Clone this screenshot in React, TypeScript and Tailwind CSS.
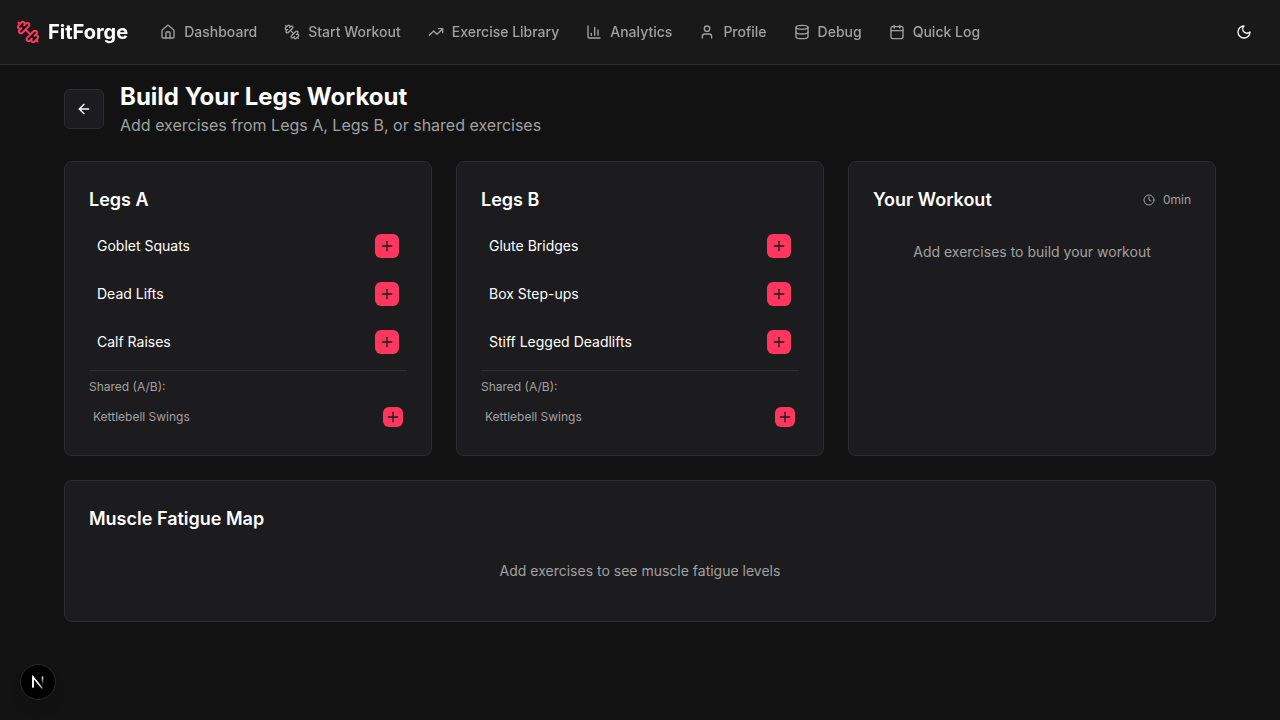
import {
  ArrowLeft,
  Calendar,
  ChartColumn,
  Clock,
  Database,
  House,
  Plus,
  TrendingUp,
  User,
} from "lucide-react";
import type { ComponentType, ReactNode } from "react";

type IconProps = { className?: string };

function StrokeIcon({ className, children }: IconProps & { children: ReactNode }) {
  return (
    <svg
      className={className}
      viewBox="0 0 24 24"
      fill="none"
      stroke="currentColor"
      strokeWidth="2"
      strokeLinecap="round"
      strokeLinejoin="round"
      aria-hidden="true"
    >
      {children}
    </svg>
  );
}

function DumbbellIcon({ className }: IconProps) {
  return (
    <StrokeIcon className={className}>
      <path d="M14.4 14.4 9.6 9.6" />
      <path d="M18.657 21.485a2 2 0 1 1-2.829-2.828l-1.767 1.768a2 2 0 1 1-2.829-2.829l6.364-6.364a2 2 0 1 1 2.829 2.829l-1.768 1.767a2 2 0 1 1 2.828 2.829z" />
      <path d="m21.5 21.5-1.4-1.4" />
      <path d="M3.9 3.9 2.5 2.5" />
      <path d="M6.404 12.768a2 2 0 1 1-2.829-2.829l1.768-1.767a2 2 0 1 1-2.828-2.829l2.828-2.828a2 2 0 1 1 2.829 2.828l1.767-1.768a2 2 0 1 1 2.829 2.829z" />
    </StrokeIcon>
  );
}

function MoonIcon({ className }: IconProps) {
  return (
    <StrokeIcon className={className}>
      <path d="M12 3a6 6 0 0 0 9 9 9 9 0 1 1-9-9Z" />
    </StrokeIcon>
  );
}

const navItems: { label: string; icon: ComponentType<IconProps> }[] = [
  { label: "Dashboard", icon: House },
  { label: "Start Workout", icon: DumbbellIcon },
  { label: "Exercise Library", icon: TrendingUp },
  { label: "Analytics", icon: ChartColumn },
  { label: "Profile", icon: User },
  { label: "Debug", icon: Database },
  { label: "Quick Log", icon: Calendar },
];

const groups = [
  {
    title: "Legs A",
    exercises: ["Goblet Squats", "Dead Lifts", "Calf Raises"],
    shared: ["Kettlebell Swings"],
  },
  {
    title: "Legs B",
    exercises: ["Glute Bridges", "Box Step-ups", "Stiff Legged Deadlifts"],
    shared: ["Kettlebell Swings"],
  },
];

function Header() {
  return (
    <header className="sticky top-0 z-40 border-b border-[#2d2d2d] bg-[#1a1a1a]/95 backdrop-blur-sm">
      <div className="flex h-16 items-center px-4">
        <a href="#home" className="mr-8 flex items-center gap-2">
          <DumbbellIcon className="size-6 text-[#ff375f]" />
          <span className="text-xl font-bold">FitForge</span>
        </a>
        <nav className="flex flex-1 items-center gap-[27px]">
          {navItems.map(({ label, icon: Icon }) => (
            <a
              key={label}
              href="#nav"
              className="flex items-center gap-2 text-sm font-medium whitespace-nowrap text-[#a1a1a1]"
            >
              <Icon className="size-4" />
              {label}
            </a>
          ))}
        </nav>
        <button
          type="button"
          aria-label="Toggle theme"
          className="flex size-10 items-center justify-center rounded-md"
        >
          <MoonIcon className="size-4" />
        </button>
      </div>
    </header>
  );
}

function Card({ children }: { children: ReactNode }) {
  return (
    <section className="rounded-lg border border-[#2d2d2d] bg-[#1c1c1e] p-6">
      {children}
    </section>
  );
}

function CardTitle({ children }: { children: ReactNode }) {
  return <h2 className="text-lg font-semibold">{children}</h2>;
}

function ExerciseGroup({ title, exercises, shared }: (typeof groups)[number]) {
  return (
    <Card>
      <CardTitle>{title}</CardTitle>
      <ul className="mt-3 flex flex-col gap-2">
        {exercises.map((name) => (
          <li key={name} className="flex items-center justify-between rounded p-2">
            <span className="text-sm">{name}</span>
            <button
              type="button"
              aria-label={`Add ${name}`}
              className="flex size-6 items-center justify-center rounded-md bg-[#ff375f] text-[#1c1c1e]"
            >
              <Plus className="size-4" />
            </button>
          </li>
        ))}
      </ul>
      <div className="mt-2 border-t border-[#2d2d2d] pt-2 text-xs text-[#a1a1a1]">
        <p className="mb-2">Shared (A/B):</p>
        <ul>
          {shared.map((name) => (
            <li key={name} className="flex items-center justify-between rounded p-1">
              <span>{name}</span>
              <button
                type="button"
                aria-label={`Add ${name}`}
                className="flex size-5 items-center justify-center rounded-md bg-[#ff375f] text-[#1c1c1e]"
              >
                <Plus className="size-4" />
              </button>
            </li>
          ))}
        </ul>
      </div>
    </Card>
  );
}

function DevBadge() {
  return (
    <button
      type="button"
      aria-label="Open developer tools"
      className="fixed bottom-5 left-5 flex size-9 items-center justify-center rounded-full border border-[#2a2a2a] bg-black shadow-lg"
    >
      <svg width="14" height="14" viewBox="0 0 14 14" fill="none">
        <defs>
          <linearGradient id="diagonal" x1="8" y1="8" x2="12" y2="14" gradientUnits="userSpaceOnUse">
            <stop stopColor="#fff" />
            <stop offset="0.7" stopColor="#fff" stopOpacity="0.6" />
            <stop offset="1" stopColor="#fff" stopOpacity="0" />
          </linearGradient>
          <linearGradient id="stem" x1="11" y1="1" x2="11" y2="10" gradientUnits="userSpaceOnUse">
            <stop stopColor="#fff" />
            <stop offset="1" stopColor="#fff" stopOpacity="0" />
          </linearGradient>
        </defs>
        <path d="M2 12.5V2L11.8 14" stroke="url(#diagonal)" strokeWidth="1.6" />
        <path d="M2 12.5V1.5" stroke="#fff" strokeWidth="1.6" />
        <path d="M11.5 1.5V10" stroke="url(#stem)" strokeWidth="1.6" />
      </svg>
    </button>
  );
}

export default function App() {
  return (
    <div className="min-h-screen bg-[#121212] font-['Inter',sans-serif] text-white">
      <Header />
      <main className="px-16 py-4">
        <div className="mb-6 flex items-center gap-4">
          <button
            type="button"
            aria-label="Go back"
            className="flex size-10 items-center justify-center rounded-md border border-[#2d2d2d] bg-[#1c1c1e]"
          >
            <ArrowLeft className="size-4" />
          </button>
          <div>
            <h1 className="text-2xl font-bold">Build Your Legs Workout</h1>
            <p className="text-[#a1a1a1]">
              Add exercises from Legs A, Legs B, or shared exercises
            </p>
          </div>
        </div>
        <div className="grid grid-cols-3 gap-6">
          {groups.map((group) => (
            <ExerciseGroup key={group.title} {...group} />
          ))}
          <Card>
            <div className="flex items-center justify-between">
              <CardTitle>Your Workout</CardTitle>
              <div className="flex items-center gap-2 text-xs text-[#a1a1a1]">
                <Clock className="size-3" />
                0min
              </div>
            </div>
            <p className="mt-3 py-4 text-center text-sm text-[#a1a1a1]">
              Add exercises to build your workout
            </p>
          </Card>
        </div>
        <div className="mt-6">
          <Card>
            <CardTitle>Muscle Fatigue Map</CardTitle>
            <p className="mt-3 py-4 text-center text-sm text-[#a1a1a1]">
              Add exercises to see muscle fatigue levels
            </p>
          </Card>
        </div>
      </main>
      <DevBadge />
    </div>
  );
}
